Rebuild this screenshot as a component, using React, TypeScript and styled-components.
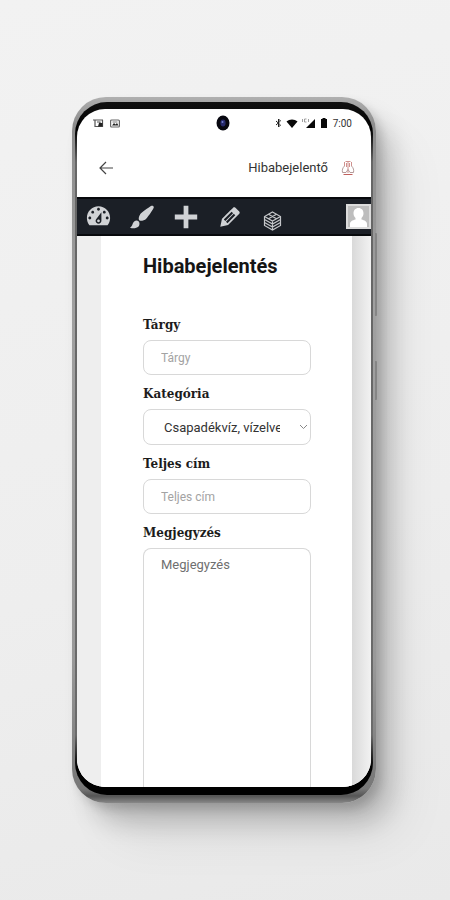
import React from "react";
import styled, { createGlobalStyle } from "styled-components";

const GlobalStyle = createGlobalStyle`
  *, *::before, *::after { box-sizing: border-box; }
  body { margin: 0; font-family: Roboto, "Noto Sans", sans-serif; color: #222; }
  button, input, select, textarea { font: inherit; color: inherit; margin: 0; }
`;

const Stage = styled.div`
  min-height: 100vh;
  display: flex;
  padding: 97px 74px 97px 72px;
  overflow: hidden;
  background: linear-gradient(165deg, #f2f2f2 0%, #f0f0f0 30%, #eeeeee 60%, #e9e9e9 100%);
`;

const PhoneFrame = styled.div`
  position: relative;
  flex: 1;
  min-width: 0;
  display: flex;
  padding: 5px 3px 8px 3px;
  border-radius: 34px;
  background: linear-gradient(180deg, #b0b0b0 0%, #8c8c8c 4%, #a0a0a0 30%, #999 80%, #777 98%, #555 99%, #888 100%);
  box-shadow:
    5px 6px 10px rgba(0, 0, 0, 0.14),
    16px 20px 26px -2px rgba(0, 0, 0, 0.2),
    32px 40px 50px -8px rgba(0, 0, 0, 0.08);
`;

const SideButton = styled.span<{ $top: number; $length: number }>`
  position: absolute;
  right: -1px;
  top: ${(p) => p.$top}px;
  width: 2px;
  height: ${(p) => p.$length}px;
  border-radius: 0 1px 1px 0;
  background: #858585;
`;

const Bezel = styled.div`
  flex: 1;
  min-width: 0;
  display: flex;
  padding: 7px 2px 8px 2px;
  border-radius: 32px;
  background: linear-gradient(180deg, #111 0, #000 28px, #666 60px, #6a6a6a calc(100% - 60px), #000 calc(100% - 28px), #000 100%);
`;

const Screen = styled.main`
  flex: 1;
  min-width: 0;
  display: flex;
  flex-direction: column;
  overflow: hidden;
  border-radius: 28px;
  background: #fff;
`;

const StatusBar = styled.div`
  display: grid;
  grid-template-columns: 1fr auto 1fr;
  align-items: center;
  height: 28px;
  padding: 0 19px 0 16px;
  font-size: 10px;
  color: #333;
`;

const StatusGroup = styled.div<{ $end?: boolean }>`
  display: flex;
  align-items: center;
  gap: ${(p) => (p.$end ? 4 : 6)}px;
  justify-content: ${(p) => (p.$end ? "flex-end" : "flex-start")};
`;

const AppHeader = styled.header`
  display: flex;
  align-items: center;
  height: 60px;
  padding: 2px 16px 0 20px;
`;

const BackButton = styled.button`
  display: flex;
  padding: 0;
  border: 0;
  background: none;
`;

const AppTitle = styled.span`
  margin-left: auto;
  margin-right: 13px;
  font-size: 13px;
  line-height: 20px;
  color: #333;
`;

const AdminBar = styled.nav`
  display: flex;
  align-items: center;
  height: 39px;
  background: #1b1f26;
  border-top: 2px solid #07090c;
  border-bottom: 2px solid #07090c;
  color: #d0d2d5;
`;

const AdminButton = styled.button<{ $low?: boolean }>`
  display: flex;
  justify-content: center;
  width: 44px;
  padding: ${(p) => (p.$low ? "8px 5px 0 0" : "0 2px 0 0")};
  border: 0;
  background: none;
`;

const AvatarButton = styled.button`
  display: flex;
  margin-left: auto;
  padding: 0;
  border: 0;
  background: none;
`;

const Page = styled.div`
  flex: 1;
  display: flex;
  padding: 0 19px 0 24px;
  background: linear-gradient(to left, #f2f2f2 0, #d9d9d9 19px, #eee 19px, #eee 100%);
`;

const Form = styled.form`
  flex: 1;
  min-width: 0;
  display: flex;
  flex-direction: column;
  padding: 18px 41px 0 42px;
  background: #fff;
`;

const Heading = styled.h1`
  margin: 0 0 38px;
  font-size: 20px;
  line-height: 24px;
  font-weight: 700;
  color: #151515;
`;

const Field = styled.div<{ $grow?: boolean }>`
  display: flex;
  flex-direction: column;
  flex: ${(p) => (p.$grow ? "1" : "none")};
  gap: 6px;
  margin-bottom: ${(p) => (p.$grow ? 0 : 10)}px;
`;

const Label = styled.label`
  font-family: "DejaVu Serif", serif;
  font-size: 12px;
  line-height: 18px;
  font-weight: 700;
  color: #1c1c1c;
`;

const TextInput = styled.input`
  width: 100%;
  height: 35px;
  padding: 0 17px;
  border: 1px solid #d8d8d8;
  border-radius: 8px;
  background: #fff;
  font-size: 12px;
  &::placeholder { color: #a3a3a3; opacity: 1; }
`;

const SelectBox = styled.div`
  position: relative;
  display: flex;
`;

const Select = styled.select`
  appearance: none;
  width: 100%;
  height: 36px;
  padding: 0 30px 0 20px;
  border: 1px solid #d8d8d8;
  border-radius: 8px;
  background: #fff;
  font-size: 13px;
  color: #333;
`;

const Chevron = styled.svg`
  position: absolute;
  right: 3px;
  top: 14px;
  pointer-events: none;
`;

const TextArea = styled.textarea`
  flex: 1;
  width: 100%;
  padding: 8px 17px;
  border: 1px solid #d8d8d8;
  border-bottom: 0;
  border-radius: 8px 8px 0 0;
  background: #fff;
  font-size: 13px;
  line-height: 16px;
  resize: none;
  &::placeholder { color: #6f6f6f; opacity: 1; }
`;

const DashIcon = ({ d, size = 28 }: { d: string; size?: number }) => (
  <svg width={size} height={size} viewBox="0 0 20 20" fill="currentColor" fillRule="evenodd" color="#d0d2d5" aria-hidden="true">
    <path d={d} />
  </svg>
);

const GAUGE =
  "M3.76 16h12.48c1.1-1.37 1.76-3.11 1.76-5 0-4.42-3.58-8-8-8s-8 3.58-8 8c0 1.89.66 3.63 1.76 5zM10 4c.55 0 1 .45 1 1s-.45 1-1 1-1-.45-1-1 .45-1 1-1zM6 6c.55 0 1 .45 1 1s-.45 1-1 1-1-.45-1-1 .45-1 1-1zm8 0c.55 0 1 .45 1 1s-.45 1-1 1-1-.45-1-1 .45-1 1-1zm-5.37 5.55L12 7v6c0 1.1-.9 2-2 2s-2-.9-2-2c0-.57.24-1.08.63-1.45zM4 10c.55 0 1 .45 1 1s-.45 1-1 1-1-.45-1-1 .45-1 1-1zm12 0c.55 0 1 .45 1 1s-.45 1-1 1-1-.45-1-1 .45-1 1-1zm-5 3c0-.55-.45-1-1-1s-1 .45-1 1 .45 1 1 1 1-.45 1-1z";
const BRUSH =
  "M18.33 3.57s.27-.8-.31-1.36c-.53-.52-1.22-.24-1.22-.24-.61.3-5.76 3.47-7.67 5.57-.86.96-2.06 3.79-1.09 4.82.92.98 3.96-.17 4.79-1 2.06-2.06 5.21-7.17 5.5-7.79zM1.4 17.65c2.37-1.56 1.46-3.41 3.23-4.64.93-.65 2.22-.62 3.08.29.63.67.8 2.57-.16 3.46-1.57 1.45-4 1.55-6.15.89z";
const PLUS = "M18 8.3v3.4h-6.3V18H8.3v-6.3H2V8.3h6.3V2h3.4v6.3z";
const PENCIL =
  "M13.89 3.39l2.71 2.72c.46.46.42 1.24.03 1.64l-8.01 8.02-5.56 1.16 1.16-5.58s7.6-7.63 7.99-8.03c.39-.39 1.22-.39 1.68.07zm-2.73 2.79l-5.59 5.61 1.11 1.11 5.54-5.65zm-2.97 8.23l5.58-5.6-1.07-1.08-5.59 5.6z";

const CubeIcon = () => (
  <svg width="19" height="20" viewBox="0 0 19 20" fill="none" stroke="#c4c6c9" strokeWidth="1.200" aria-hidden="true">
    <path d="M9.500 1 17.500 5.500v9L9.500 19 1.500 14.500v-9z" />
    <path d="M1.500 5.500l8 4.500 8-4.500M1.500 8.500l8 4.500 8-4.500M1.500 11.500l8 4.500 8-4.500M9.500 10v9M5.500 3.300l8 4.500M13.500 3.300l-8 4.500" />
  </svg>
);

const AvatarIcon = () => (
  <svg width="25" height="25" viewBox="0 0 25 25" aria-hidden="true">
    <rect width="25" height="25" fill="#dcdcdc" />
    <rect x="2" y="2" width="21" height="21" fill="#bdbdbd" />
    <path d="M12.500 4c3.200 0 5 2.300 5 5.200 0 2-.8 3.700-2 4.700v1.600c3 .8 5.500 2 5.500 4.500v3H4v-3c0-2.500 2.500-3.700 5.500-4.500v-1.600c-1.200-1-2-2.700-2-4.700C7.500 6.300 9.300 4 12.500 4z" fill="#fff" />
  </svg>
);

const CrestIcon = () => (
  <svg width="14" height="16" viewBox="0 0 14 16" fill="none" stroke="#d0918e" strokeWidth="1" aria-hidden="true">
    <path d="M4.500 1.500h5M3.500 2v4M10.500 2v4M7 2v11M5.500 3v4M8.500 3v4" />
    <path d="M3.500 6C1.500 8 1 10 1.500 12.500h3.500L7 9.500l2 3h3.500C13 10 12.500 8 10.500 6" stroke="#b59a99" />
    <path d="M2.500 14.500h9" stroke="#c0605d" />
  </svg>
);

const App = () => (
  <>
    <GlobalStyle />
    <Stage>
      <PhoneFrame>
        <SideButton $top={136} $length={83} />
        <SideButton $top={264} $length={39} />
        <Bezel>
          <Screen>
            <StatusBar>
              <StatusGroup>
                <svg width="11" height="9" viewBox="0 0 11 9" aria-hidden="true">
                  <path d="M0 1h10M2 1v6.500h7.500V1M4 3h3v2" fill="none" stroke="#555" strokeWidth="1.200" />
                  <path d="M6 4h3.500v3.500H5z" fill="#222" />
                </svg>
                <svg width="10" height="9" viewBox="0 0 10 9" aria-hidden="true">
                  <rect x=".6" y="1" width="8.800" height="7" rx="1" fill="none" stroke="#666" strokeWidth="1.200" />
                  <path d="M2 6.500 4 4l1.500 1.500L7 4l1.500 2.500z" fill="#222" />
                  <path d="M2.500 3h5" stroke="#777" />
                </svg>
              </StatusGroup>
              <svg width="14" height="16" viewBox="0 0 14 16" aria-hidden="true">
                <ellipse cx="7" cy="8" rx="6.500" ry="7.500" fill="#07070f" />
                <ellipse cx="7" cy="8" rx="2.600" ry="3.400" fill="#26296b" />
                <circle cx="6.500" cy="7" r="1" fill="#6f7fd0" />
              </svg>
              <StatusGroup $end>
                <svg width="7" height="10" viewBox="0 0 7 10" fill="none" stroke="#222" aria-hidden="true">
                  <path d="M1 3l4.500 4L3.500 9V1l2 2L1 7" />
                </svg>
                <svg width="12" height="9" viewBox="0 0 12 9" aria-hidden="true">
                  <path d="M6 9 .5 2.500C3.500-.2 8.500-.2 11.500 2.500z" fill="#080808" />
                </svg>
                <svg width="13" height="10" viewBox="0 0 13 10" aria-hidden="true">
                  <path d="M13 1v9H4z" fill="#080808" />
                  <path d="M.5 1v3M2.500 1v3h2M2.500 1h2M6.500 1v3" stroke="#888" strokeWidth=".8" fill="none" />
                </svg>
                <svg width="10" height="10" viewBox="0 0 10 10" aria-hidden="true">
                  <path d="M3.500 0h3v1H8v9H2V1h1.500z" fill="#080808" />
                </svg>
                <span>7:00</span>
              </StatusGroup>
            </StatusBar>
            <AppHeader>
              <BackButton type="button" aria-label="Vissza">
                <svg width="18" height="16" viewBox="0 0 18 16" fill="none" stroke="#444" strokeWidth="1.200" aria-hidden="true">
                  <path d="M16 8H3M9 2 3 8l6 6" />
                </svg>
              </BackButton>
              <AppTitle>Hibabejelentő</AppTitle>
              <CrestIcon />
            </AppHeader>
            <AdminBar>
              <AdminButton type="button" aria-label="Vezérlőpult"><DashIcon d={GAUGE} size={29} /></AdminButton>
              <AdminButton type="button" aria-label="Testreszabás"><DashIcon d={BRUSH} /></AdminButton>
              <AdminButton type="button" aria-label="Új"><DashIcon d={PLUS} /></AdminButton>
              <AdminButton type="button" aria-label="Szerkesztés"><DashIcon d={PENCIL} /></AdminButton>
              <AdminButton type="button" aria-label="Blokkok" $low><CubeIcon /></AdminButton>
              <AvatarButton type="button" aria-label="Profil"><AvatarIcon /></AvatarButton>
            </AdminBar>
            <Page>
              <Form>
                <Heading>Hibabejelentés</Heading>
                <Field>
                  <Label htmlFor="subject">Tárgy</Label>
                  <TextInput id="subject" type="text" placeholder="Tárgy" />
                </Field>
                <Field>
                  <Label htmlFor="category">Kategória</Label>
                  <SelectBox>
                    <Select id="category" defaultValue="water">
                      <option value="water">Csapadékvíz, vízelvezetés</option>
                    </Select>
                    <Chevron width="9" height="8" viewBox="0 0 9 8" fill="none" stroke="#888" aria-hidden="true">
                      <path d="M1 2l3.500 3.500L8 2" />
                    </Chevron>
                  </SelectBox>
                </Field>
                <Field>
                  <Label htmlFor="address">Teljes cím</Label>
                  <TextInput id="address" type="text" placeholder="Teljes cím" />
                </Field>
                <Field $grow>
                  <Label htmlFor="note">Megjegyzés</Label>
                  <TextArea id="note" placeholder="Megjegyzés" />
                </Field>
              </Form>
            </Page>
          </Screen>
        </Bezel>
      </PhoneFrame>
    </Stage>
  </>
);

export default App;
